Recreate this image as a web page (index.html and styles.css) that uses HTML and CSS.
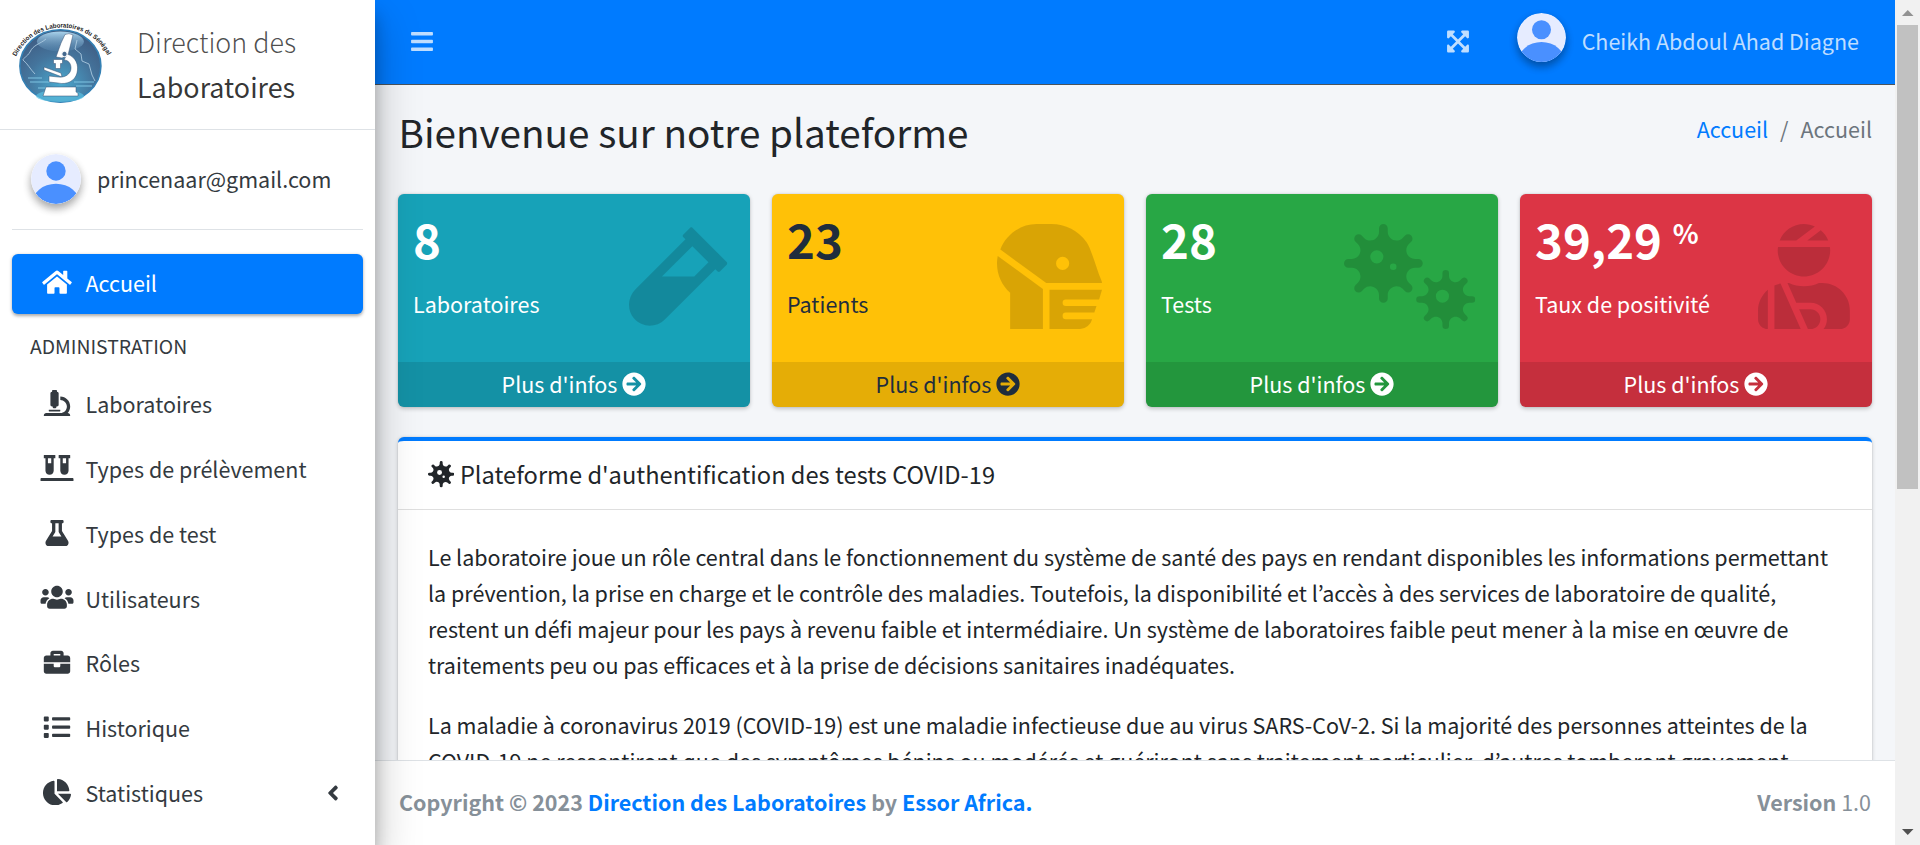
FILE: index.html
```html
<!DOCTYPE html>
<html lang="fr">
<head>
<meta charset="utf-8">
<title>Direction des Laboratoires</title>
<link rel="stylesheet" href="styles.css">
</head>
<body>
<svg class="defs" aria-hidden="true">
  <symbol id="i-home" viewBox="0 0 576 512"><path d="M280.37 148.26L96 300.11V464a16 16 0 0 0 16 16l112.06-.29a16 16 0 0 0 15.92-16V368a16 16 0 0 1 16-16h64a16 16 0 0 1 16 16v95.64a16 16 0 0 0 16 16.05L464 480a16 16 0 0 0 16-16V300L295.67 148.26a12.19 12.19 0 0 0-15.3 0zM571.6 251.47L488 182.56V44.05a12 12 0 0 0-12-12h-56a12 12 0 0 0-12 12v72.61L318.47 43a48 48 0 0 0-61 0L4.34 251.47a12 12 0 0 0-1.6 16.9l25.5 31A12 12 0 0 0 45.15 301l235.22-193.74a12.19 12.19 0 0 1 15.3 0L530.9 301a12 12 0 0 0 16.9-1.6l25.5-31a12 12 0 0 0-1.7-16.93z"/></symbol>
  <symbol id="i-microscope" viewBox="0 0 512 512"><path d="M160 320h12v16c0 8.84 7.16 16 16 16h40c8.84 0 16-7.16 16-16v-16h12c17.67 0 32-14.33 32-32V64c0-17.67-14.33-32-32-32V16c0-8.84-7.16-16-16-16h-64c-8.84 0-16 7.16-16 16v16c-17.67 0-32 14.33-32 32v224c0 17.67 14.33 32 32 32zm304 128h-1.29C493.24 413.99 512 369.2 512 320c0-105.88-86.12-192-192-192v64c70.58 0 128 57.42 128 128s-57.42 128-128 128H48c-26.51 0-48 21.49-48 48 0 8.84 7.16 16 16 16h480c8.84 0 16-7.16 16-16 0-26.51-21.49-48-48-48zm-360-32h208c4.42 0 8-3.58 8-8v-16c0-4.42-3.58-8-8-8H104c-4.42 0-8 3.58-8 8v16c0 4.42 3.58 8 8 8z"/></symbol>
  <symbol id="i-vials" viewBox="0 0 640 512"><path d="M72 64h24v240c0 44.1 35.9 80 80 80s80-35.9 80-80V64h24c4.4 0 8-3.6 8-8V8c0-4.4-3.6-8-8-8H72c-4.4 0-8 3.6-8 8v48c0 4.4 3.6 8 8 8zm72 0h64v96h-64V64zm480 384H16c-8.800 0-16 7.200-16 16v32c0 8.800 7.200 16 16 16h608c8.800 0 16-7.200 16-16v-32c0-8.800-7.200-16-16-16zM360 64h24v240c0 44.100 35.900 80 80 80s80-35.900 80-80V64h24c4.400 0 8-3.600 8-8V8c0-4.400-3.600-8-8-8H360c-4.400 0-8 3.600-8 8v48c0 4.400 3.600 8 8 8zm72 0h64v96h-64V64z"/></symbol>
  <symbol id="i-flask" viewBox="0 0 448 512"><path d="M437.2 403.5L320 215V64h8c13.3 0 24-10.7 24-24V24c0-13.3-10.7-24-24-24H120c-13.3 0-24 10.7-24 24v16c0 13.3 10.7 24 24 24h8v151L10.8 403.5C-18.5 450.6 15.3 512 70.9 512h306.2c55.7 0 89.4-61.5 60.1-108.5zM137.9 320l48.2-77.6c3.7-5.2 5.8-11.6 5.8-18.4V64h64v160c0 6.9 2.2 13.2 5.8 18.4l48.2 77.6h-172z"/></symbol>
  <symbol id="i-users" viewBox="0 0 640 512"><path d="M96 224c35.3 0 64-28.7 64-64s-28.7-64-64-64-64 28.7-64 64 28.7 64 64 64zm448 0c35.3 0 64-28.7 64-64s-28.7-64-64-64-64 28.7-64 64 28.7 64 64 64zm32 32h-64c-17.6 0-33.5 7.1-45.1 18.6 40.3 22.1 68.9 62 75.1 109.4h66c17.7 0 32-14.3 32-32v-32c0-35.3-28.7-64-64-64zm-256 0c61.9 0 112-50.1 112-112S381.9 32 320 32 208 82.1 208 144s50.1 112 112 112zm76.8 32h-8.3c-20.8 10-43.9 16-68.5 16s-47.6-6-68.5-16h-8.3C179.6 288 128 339.6 128 403.2V432c0 26.5 21.5 48 48 48h288c26.5 0 48-21.5 48-48v-28.8c0-63.6-51.6-115.2-115.2-115.2zm-223.7-13.4C161.5 263.1 145.6 256 128 256H64c-35.3 0-64 28.7-64 64v32c0 17.7 14.3 32 32 32h65.9c6.3-47.4 34.9-87.3 75.2-109.4z"/></symbol>
  <symbol id="i-briefcase" viewBox="0 0 512 512"><path d="M320 336c0 8.84-7.16 16-16 16h-96c-8.84 0-16-7.16-16-16v-48H0v144c0 25.6 22.4 48 48 48h416c25.6 0 48-22.4 48-48V288H320v48zm144-208h-80V80c0-25.6-22.4-48-48-48H176c-25.6 0-48 22.4-48 48v48H48c-25.6 0-48 22.4-48 48v80h512v-80c0-25.6-22.4-48-48-48zm-144 0H192V96h128v32z"/></symbol>
  <symbol id="i-list" viewBox="0 0 512 512"><path d="M80 368H16a16 16 0 0 0-16 16v64a16 16 0 0 0 16 16h64a16 16 0 0 0 16-16v-64a16 16 0 0 0-16-16zm0-320H16A16 16 0 0 0 0 64v64a16 16 0 0 0 16 16h64a16 16 0 0 0 16-16V64a16 16 0 0 0-16-16zm0 160H16a16 16 0 0 0-16 16v64a16 16 0 0 0 16 16h64a16 16 0 0 0 16-16v-64a16 16 0 0 0-16-16zm416 176H176a16 16 0 0 0-16 16v32a16 16 0 0 0 16 16h320a16 16 0 0 0 16-16v-32a16 16 0 0 0-16-16zm0-320H176a16 16 0 0 0-16 16v32a16 16 0 0 0 16 16h320a16 16 0 0 0 16-16V80a16 16 0 0 0-16-16zm0 160H176a16 16 0 0 0-16 16v32a16 16 0 0 0 16 16h320a16 16 0 0 0 16-16v-32a16 16 0 0 0-16-16z"/></symbol>
  <symbol id="i-pie" viewBox="0 0 544 512"><path d="M527.79 288H290.5l158.03 158.03c6.04 6.04 15.98 6.53 22.19.68 38.7-36.46 65.32-85.61 73.13-140.86 1.34-9.46-6.51-17.85-16.06-17.85zm-15.83-64.8C503.72 103.74 408.26 8.28 288.8.04 279.68-.59 272 7.1 272 16.24V240h223.77c9.14 0 16.82-7.68 16.19-16.8zM224 288V50.71c0-9.55-8.39-17.4-17.84-16.06C86.99 51.49-4.1 155.6.14 280.37 4.5 408.51 114.83 513.59 243.03 511.98c50.4-.63 96.97-16.87 135.26-44.03 7.9-5.6 8.42-17.23 1.57-24.08L224 288z"/></symbol>
  <symbol id="i-angle" viewBox="0 0 256 512"><path d="M31.7 239l136-136c9.4-9.4 24.6-9.4 33.9 0l22.6 22.6c9.4 9.4 9.4 24.6 0 33.9L127.9 256l96.4 96.4c9.4 9.4 9.4 24.6 0 33.9L201.7 409c-9.4 9.4-24.6 9.4-33.9 0l-136-136c-9.5-9.4-9.5-24.6-.1-34z"/></symbol>
  <symbol id="i-bars" viewBox="0 0 448 512"><path d="M16 132h416c8.8 0 16-7.2 16-16V76c0-8.8-7.2-16-16-16H16C7.2 60 0 67.2 0 76v40c0 8.8 7.2 16 16 16zm0 160h416c8.8 0 16-7.2 16-16v-40c0-8.8-7.2-16-16-16H16c-8.8 0-16 7.2-16 16v40c0 8.8 7.2 16 16 16zm0 160h416c8.8 0 16-7.2 16-16v-40c0-8.8-7.2-16-16-16H16c-8.8 0-16 7.2-16 16v40c0 8.8 7.2 16 16 16z"/></symbol>
  <symbol id="i-expand" viewBox="0 0 448 512"><path d="M448 344v112a23.94 23.94 0 0 1-24 24H312c-21.39 0-32.09-25.9-17-41l36.2-36.2L224 295.6 116.77 402.9 153 439c15.09 15.1 4.39 41-17 41H24a23.94 23.94 0 0 1-24-24V344c0-21.4 25.89-32.1 41-17l36.19 36.2L184.46 256 77.18 148.7 41 185c-15.1 15.1-41 4.4-41-17V56a23.94 23.94 0 0 1 24-24h112c21.39 0 32.09 25.9 17 41l-36.2 36.2L224 216.4l107.23-107.3L295 73c-15.09-15.1-4.39-41 17-41h112a23.94 23.94 0 0 1 24 24v112c0 21.4-25.89 32.1-41 17l-36.19-36.2L263.54 256l107.28 107.3L407 327.1c15.1-15.2 41-4.5 41 16.9z"/></symbol>
  <symbol id="i-arrow" viewBox="0 0 512 512"><path d="M256 8c137 0 248 111 248 248S393 504 256 504 8 393 8 256 119 8 256 8zm-28.9 143.6l75.5 72.4H120c-13.3 0-24 10.7-24 24v16c0 13.3 10.7 24 24 24h182.6l-75.5 72.4c-9.7 9.3-9.9 24.8-.4 34.3l11 10.9c9.4 9.4 24.6 9.4 33.9 0L404.3 273c9.4-9.4 9.4-24.6 0-33.9L271.6 106.3c-9.4-9.4-24.6-9.4-33.9 0l-11 10.9c-9.5 9.6-9.3 25.1.4 34.4z"/></symbol>
  <symbol id="i-vial" viewBox="0 0 480 512"><path d="M477.7 186.1L309.5 18.3c-3.1-3.1-8.2-3.1-11.3 0l-34 33.9c-3.1 3.1-3.1 8.2 0 11.3l11.2 11.1L33 316.5c-38.8 38.7-45.1 102-9.4 143.5 20.6 24 49.5 36 78.4 35.9 26.4 0 52.8-10 72.9-30.1l246.3-245.7 11.2 11.1c3.1 3.1 8.2 3.1 11.3 0l34-33.9c3.1-3 3.1-8.1 0-11.2zM318 256H161l148-147.7 78.5 78.3L318 256z"/></symbol>
  <symbol id="i-mask" viewBox="0 0 512 512"><path d="M.15 184.42C-2.17 244.21 23 298.06 64 334.88V512h160V316.51L3.67 156.25A182.28 182.28 0 0 0 .15 184.42zM509.22 275c-21-47.12-48.5-151.75-73.12-186.75A208.11 208.11 0 0 0 266.11 0H192C117 0 42.48 50.57 16.28 124.38L240 288h272a35 35 0 0 0-2.78-13zM320 224a32 32 0 1 1 32-32 32 32 0 0 1-32 32zM336 368h162L512 320H256v192h150.3a64 64 0 0 0 57.7-48H336a16 16 0 0 1 0-32h138.7L485.3 400H336a16 16 0 0 1 0-32z"/></symbol>
  <symbol id="i-viruses" viewBox="0 0 640 512"><path d="M624,352H611.88c-28.51,0-42.79-34.47-22.63-54.63l8.58-8.57a16,16,0,1,0-22.63-22.63l-8.57,8.58C546.47,294.91,512,280.63,512,252.12V240a16,16,0,0,0-32,0v12.12c0,28.51-34.47,42.79-54.63,22.63l-8.57-8.58a16,16,0,0,0-22.63,22.63l8.58,8.57c20.16,20.16,5.88,54.63-22.63,54.63H368a16,16,0,0,0,0,32h12.12c28.51,0,42.79,34.47,22.63,54.63l-8.58,8.57a16,16,0,1,0,22.63,22.63l8.57-8.58c20.16-20.16,54.63-5.88,54.63,22.63V496a16,16,0,0,0,32,0V483.88c0-28.51,34.47-42.79,54.63-22.63l8.57,8.58a16,16,0,1,0,22.63-22.63l-8.58-8.57C569.09,418.47,583.37,384,611.88,384H624a16,16,0,0,0,0-32ZM480,384a32,32,0,1,1,32-32A32,32,0,0,1,480,384ZM346.51,213.33h16.16a21.33,21.33,0,0,0,0-42.66H346.51c-38,0-57.05-46-30.17-72.84l11.43-11.44A21.33,21.33,0,0,0,297.6,56.23L286.17,67.66c-26.88,26.88-72.84,7.85-72.84-30.17V21.33a21.33,21.33,0,0,0-42.66,0V37.49c0,38-46,57.05-72.84,30.17L86.4,56.23A21.33,21.33,0,0,0,56.23,86.39L67.66,97.83c26.88,26.88,7.85,72.84-30.17,72.84H21.33a21.33,21.33,0,0,0,0,42.66H37.49c38,0,57.05,46,30.17,72.84L56.23,297.6A21.33,21.33,0,1,0,86.4,327.77l11.43-11.43c26.88-26.88,72.84-7.85,72.84,30.17v16.16a21.33,21.33,0,0,0,42.66,0V346.51c0-38,46-57.05,72.84-30.17l11.43,11.43a21.33,21.33,0,0,0,30.17-30.17l-11.43-11.43C289.46,259.29,308.49,213.33,346.51,213.33ZM160,192a32,32,0,1,1,32-32A32,32,0,0,1,160,192Zm80,32a16,16,0,1,1,16-16A16,16,0,0,1,240,224Z"/></symbol>
  <symbol id="i-injured" viewBox="0 0 448 512"><path d="M277.37 11.98C261.08 4.47 243.11 0 224 0c-53.69 0-99.5 33.13-118.51 80h81.19l90.69-68.02zM342.51 80c-7.9-19.47-20.67-36.2-36.49-49.52L239.99 80h102.52zM224 256c70.69 0 128-57.31 128-128 0-5.48-.95-10.7-1.61-16H97.61c-.67 5.3-1.61 10.52-1.61 16 0 70.69 57.31 128 128 128zM80 299.7V512h128.26l-98.45-221.52A132.835 132.835 0 0 0 80 299.7zM0 464c0 26.51 21.49 48 48 48V320.24C18.88 344.89 0 381.26 0 422.4V464zm256-48h-55.38l42.67 96H256c26.47 0 48-21.53 48-48s-21.53-48-48-48zm57.6-128h-16.71c-22.24 10.18-46.88 16-72.89 16s-50.65-5.82-72.89-16h-7.37l42.67 96H256c44.11 0 80 35.89 80 80 0 18.08-6.26 34.59-16.41 48H400c26.51 0 48-21.49 48-48v-41.6c0-74.23-60.17-134.4-134.4-134.4z"/></symbol>
  <symbol id="i-virus" viewBox="0 0 512 512"><path d="M483.55,227.55H462c-50.68,0-76.07-61.27-40.23-97.11L437,115.19A28.44,28.44,0,0,0,396.8,75L381.56,90.22c-35.84,35.83-97.11,10.45-97.11-40.23V28.44a28.45,28.45,0,0,0-56.9,0V50c0,50.68-61.27,76.06-97.11,40.23L115.2,75A28.44,28.44,0,0,0,75,115.19l15.25,15.25c35.84,35.84,10.45,97.11-40.23,97.11H28.45a28.45,28.45,0,1,0,0,56.89H50c50.68,0,76.07,61.28,40.23,97.12L75,396.8A28.45,28.45,0,0,0,115.2,437l15.24-15.25c35.84-35.84,97.11-10.45,97.11,40.23v21.54a28.45,28.45,0,0,0,56.9,0V462c0-50.68,61.27-76.07,97.11-40.23L396.8,437A28.45,28.45,0,0,0,437,396.8l-15.25-15.24c-35.84-35.84-10.45-97.12,40.23-97.12h21.54a28.45,28.45,0,1,0,0-56.89ZM224,272a48,48,0,1,1,48-48A48,48,0,0,1,224,272Zm80,56a24,24,0,1,1,24-24A24,24,0,0,1,304,328Z"/></symbol>
  <clipPath id="disc"><circle cx="25" cy="25" r="25"/></clipPath>
  <symbol id="i-avatar" viewBox="0 0 50 50"><g clip-path="url(#disc)"><rect width="50" height="50" fill="#e6ecff"/><circle cx="25" cy="17" r="9.7" fill="#4a90ff"/><ellipse cx="25" cy="50" rx="24" ry="20.3" fill="#4a90ff"/></g></symbol>
</svg>

<div class="app">
  <aside class="sidebar">
    <a class="brand">
      <svg class="brand-logo" viewBox="0 0 100 86">
        <defs>
          <radialGradient id="globe" cx=".5" cy=".75" r=".75"><stop offset="0" stop-color="#4aa9cf"/><stop offset=".55" stop-color="#44749c"/><stop offset="1" stop-color="#3f5a80"/></radialGradient>
          <linearGradient id="shine" x1="0" y1="0" x2="0" y2="1"><stop offset="0" stop-color="#a9d3ec"/><stop offset="1" stop-color="#5a8db6" stop-opacity=".3"/></linearGradient>
          <path id="arc" d="M6 36.500A51 51 0 0 1 98 36.500"/>
        </defs>
        <text class="logo-text"><textPath href="#arc" textLength="113" lengthAdjust="spacingAndGlyphs">Direction des Laboratoires du Sénégal</textPath></text>
        <ellipse cx="50.4" cy="46" rx="40.5" ry="36.300" fill="url(#globe)" stroke="#3480b4" stroke-width="1.6"/>
        <ellipse cx="50.4" cy="21.500" rx="23.500" ry="10" fill="url(#shine)"/>
        <path d="M18 58h14M20 62h20M28 68h8M64 62h20M66 66h16" stroke="#7fc4e2" stroke-width="1" fill="none"/>
        <path d="M36 19c-6 5-13 6-16 13-3 5-7 6-7 8 5 4 7 9 12 14M67 20l-2 9 6 5 1 7 7 3 3 11 3 6" stroke="#b5d2e6" stroke-width=".8" fill="none"/>
        <ellipse cx="50" cy="76" rx="24" ry="6" fill="#5cc4e5" opacity=".65"/>
        <g fill="#fff" stroke="#344f70" stroke-width=".5">
          <path d="M55 14.500q4-2 8 .5l-5 20-6 3-6-1 5-14z"/>
          <path d="M43.500 39.500h9v4h-2v5h-5v-5h-2z"/>
          <path d="M34 47l17 6 1 4-18-7z"/>
          <path d="M57 34c9 3 12 11 10 19-2 8-10 12-19 10l-9-1v-6l9 1c7 1 13-3 13-9 0-5-3-8-7-8z"/>
          <path d="M36 67h30v5l2 1v3H33l1-3z"/>
        </g>
        <circle cx="54.500" cy="34" r="2.700" fill="#43678d" stroke="#fff"/>
      </svg>
      <span class="brand-text"><span class="light">Direction des</span><span>Laboratoires</span></span>
    </a>
    <div class="user-panel">
      <svg class="avatar"><use href="#i-avatar"/></svg>
      <span class="user-mail">princenaar@gmail.com</span>
    </div>
    <nav class="nav">
      <a class="nav-link active"><svg class="nav-icon"><use href="#i-home"/></svg><span>Accueil</span></a>
      <div class="nav-header">ADMINISTRATION</div>
      <a class="nav-link"><svg class="nav-icon"><use href="#i-microscope"/></svg><span>Laboratoires</span></a>
      <a class="nav-link"><svg class="nav-icon"><use href="#i-vials"/></svg><span>Types de prélèvement</span></a>
      <a class="nav-link"><svg class="nav-icon"><use href="#i-flask"/></svg><span>Types de test</span></a>
      <a class="nav-link"><svg class="nav-icon"><use href="#i-users"/></svg><span>Utilisateurs</span></a>
      <a class="nav-link"><svg class="nav-icon"><use href="#i-briefcase"/></svg><span>Rôles</span></a>
      <a class="nav-link"><svg class="nav-icon"><use href="#i-list"/></svg><span>Historique</span></a>
      <a class="nav-link"><svg class="nav-icon"><use href="#i-pie"/></svg><span>Statistiques</span><svg class="nav-angle"><use href="#i-angle"/></svg></a>
    </nav>
  </aside>

  <div class="main">
    <header class="topbar">
      <svg class="bar-icon"><use href="#i-bars"/></svg>
      <div class="topbar-right">
        <svg class="bar-icon"><use href="#i-expand"/></svg>
        <svg class="avatar"><use href="#i-avatar"/></svg>
        <span class="user-name">Cheikh Abdoul Ahad Diagne</span>
      </div>
    </header>

    <main class="content">
      <div class="page-head">
        <h1 class="page-title">Bienvenue sur notre plateforme</h1>
        <div class="breadcrumb"><a class="link">Accueil</a><span>/</span><span>Accueil</span></div>
      </div>

      <div class="boxes">
        <div class="box info">
          <div class="inner"><div class="value">8</div><div class="label">Laboratoires</div></div>
          <svg class="box-icon w480"><use href="#i-vial"/></svg>
          <a class="more"><span>Plus d'infos</span><svg class="arrow"><use href="#i-arrow"/></svg></a>
        </div>
        <div class="box warning">
          <div class="inner"><div class="value">23</div><div class="label">Patients</div></div>
          <svg class="box-icon w512"><use href="#i-mask"/></svg>
          <a class="more"><span>Plus d'infos</span><svg class="arrow"><use href="#i-arrow"/></svg></a>
        </div>
        <div class="box success">
          <div class="inner"><div class="value">28</div><div class="label">Tests</div></div>
          <svg class="box-icon w640"><use href="#i-viruses"/></svg>
          <a class="more"><span>Plus d'infos</span><svg class="arrow"><use href="#i-arrow"/></svg></a>
        </div>
        <div class="box danger">
          <div class="inner"><div class="value">39,29 <sup>%</sup></div><div class="label">Taux de positivité</div></div>
          <svg class="box-icon w448"><use href="#i-injured"/></svg>
          <a class="more"><span>Plus d'infos</span><svg class="arrow"><use href="#i-arrow"/></svg></a>
        </div>
      </div>

      <section class="card">
        <div class="card-header"><svg class="card-icon"><use href="#i-virus"/></svg><span>Plateforme d'authentification des tests COVID-19</span></div>
        <div class="card-body">
          <p>Le laboratoire joue un rôle central dans le fonctionnement du système de santé des pays en rendant disponibles les informations permettant<br>la prévention, la prise en charge et le contrôle des maladies. Toutefois, la disponibilité et l’accès à des services de laboratoire de qualité,<br>restent un défi majeur pour les pays à revenu faible et intermédiaire. Un système de laboratoires faible peut mener à la mise en œuvre de<br>traitements peu ou pas efficaces et à la prise de décisions sanitaires inadéquates.</p>
          <p>La maladie à coronavirus 2019 (COVID-19) est une maladie infectieuse due au virus SARS-CoV-2. Si la majorité des personnes atteintes de la<br>COVID-19 ne ressentiront que des symptômes bénins ou modérés et guériront sans traitement particulier, d’autres tomberont gravement</p>
        </div>
      </section>
    </main>

    <footer class="footer">
      <strong>Copyright © 2023 <a class="link">Direction des Laboratoires</a> by <a class="link">Essor Africa.</a></strong>
      <span><b>Version</b> 1.0</span>
    </footer>
  </div>

  <div class="scrollbar">
    <svg class="sb-arrow" viewBox="0 0 25 25"><path d="M7 16h11.500L12.750 10z" fill="#929292"/></svg>
    <div class="sb-thumb"></div>
    <svg class="sb-arrow sb-down" viewBox="0 0 25 25"><path d="M7 9h11.500L12.750 15z" fill="#505050"/></svg>
  </div>
</div>
</body>
</html>
```
FILE: styles.css
```css
* { box-sizing: border-box; }

body {
  margin: 0;
  font-family: "Noto Sans CJK JP", "Noto Sans", sans-serif;
  font-size: 21.5px;
  line-height: 36px;
  color: #212529;
  background: #f4f6f9;
  overflow: hidden;
}

svg { fill: currentColor; flex: none; }
.defs { position: absolute; width: 0; height: 0; }
.link { color: #007bff; }

.app { display: flex; height: 845px; }

/* Sidebar */
.sidebar {
  position: relative;
  z-index: 2;
  flex: none;
  width: 375px;
  background: #fff;
  color: #343a40;
  box-shadow: 0 21px 42px rgba(0, 0, 0, .25), 0 15px 15px rgba(0, 0, 0, .22);
}

.brand {
  display: flex;
  height: 130px;
  padding: 20px 0 0 10px;
  border-bottom: 1px solid #dee2e6;
  color: rgba(0, 0, 0, .8);
}
.brand-logo { width: 100px; height: 86px; overflow: visible; }
.logo-text { font: bold 6.5px "Liberation Sans", sans-serif; fill: #222; }
.brand-text {
  display: flex;
  flex-direction: column;
  margin: -1px 0 0 27px;
  font-size: 26.9px;
  line-height: 45px;
}
.brand-text .light { font-weight: 300; color: rgba(0, 0, 0, .7); }

.user-panel {
  display: flex;
  height: 100px;
  margin: 0 12px;
  padding: 24px 0 0 19px;
  border-bottom: 1px solid #dee2e6;
}
.avatar {
  width: 50px;
  height: 50px;
  border-radius: 50%;
  box-shadow: 0 4.5px 9px rgba(0, 0, 0, .16), 0 4.5px 9px rgba(0, 0, 0, .23);
}
.user-mail { margin: 7px 0 0 16px; }

.nav { padding: 24px 12px 0; }
.nav-link {
  display: flex;
  align-items: center;
  height: 60px;
  margin-bottom: 4.8px;
  padding: 0 0 2px 25px;
  border-radius: 6px;
}
.nav-link.active {
  background: #007bff;
  color: #fff;
  box-shadow: 0 1.5px 4.5px rgba(0, 0, 0, .12), 0 1.5px 3px rgba(0, 0, 0, .24);
}
.nav-icon { width: 38px; height: 26.4px; margin: 0 10px 2px 0.500px; }
.nav-angle { width: 12px; height: 24px; margin: 0 24px 0 auto; }
.nav-header { height: 56.5px; padding: 9px 0 0 18px; font-size: 19.35px; }

/* Top bar */
.main { display: flex; flex-direction: column; flex: 1; min-width: 0; }
.topbar {
  display: flex;
  justify-content: space-between;
  align-items: center;
  flex: none;
  height: 85px;
  padding: 0 36px;
  border-bottom: 1px solid #4b545c;
  background: #007bff;
  color: rgba(255, 255, 255, .75);
}
.bar-icon { width: 22px; height: 25px; margin-bottom: 2px; }
.topbar-right { display: flex; align-items: center; }
.topbar-right .avatar { width: 49px; height: 49px; margin: 0 16px 9px 47.500px; }
.user-name { margin-bottom: 2px; }

/* Content */
.content { flex: 1; min-height: 0; overflow: hidden; padding: 0 23px; }
.page-head {
  display: flex;
  justify-content: space-between;
  height: 109px;
  padding-top: 20px;
}
.page-title { margin: 0 0 0 .5px; font-size: 38.7px; line-height: 52px; font-weight: 400; }
.breadcrumb { display: flex; gap: 12px; padding-top: 6px; color: #6c757d; }

.boxes { display: grid; grid-template-columns: repeat(4, 1fr); gap: 22px; }
.box {
  position: relative;
  display: flex;
  flex-direction: column;
  justify-content: space-between;
  height: 213px;
  border-radius: 6px;
  overflow: hidden;
  color: #fff;
  box-shadow: 0 0 1.5px rgba(0, 0, 0, .125), 0 1.5px 4.5px rgba(0, 0, 0, .2);
}
.info { background: #17a2b8; }
.warning { background: #ffc107; color: #1f2d3d; }
.success { background: #28a745; }
.danger { background: #dc3545; }
.inner { padding: 13px 15px; }
.value { font-size: 47.3px; line-height: 63px; font-weight: 700; white-space: nowrap; }
.value sup { position: relative; top: -15px; font-size: 26.9px; line-height: 0; vertical-align: baseline; }
.label { margin-top: 16px; }
.box-icon { position: absolute; top: 30px; right: 22.500px; height: 105px; fill: rgba(0, 0, 0, .15); }
.w480 { width: 98.400px; }
.w512 { width: 105px; }
.w640 { width: 131.250px; }
.w448 { width: 91.900px; }
.more {
  display: flex;
  justify-content: center;
  align-items: center;
  gap: 5px;
  height: 45px;
  padding-bottom: 1px;
  background: rgba(0, 0, 0, .1);
}
.more span { margin-bottom: 1px; }
.arrow { width: 24px; height: 24px; }

.card {
  margin-top: 30px;
  border-top: 4.5px solid #007bff;
  border-radius: 6px;
  background: #fff;
  box-shadow: 0 0 1.5px rgba(0, 0, 0, .125), 0 1.5px 4.5px rgba(0, 0, 0, .2);
}
.card-header {
  display: flex;
  align-items: center;
  gap: 5.5px;
  height: 69px;
  padding: 0 30px;
  border-bottom: 1px solid rgba(0, 0, 0, .125);
  font-size: 23.65px;
}
.card-header span { margin-bottom: 2px; }
.card-icon { width: 26.4px; height: 26.4px; margin-bottom: 1px; }
.card-body { padding: 29px 30px; white-space: nowrap; }
.card-body p { margin: 0 0 24px; }

/* Footer */
.footer {
  display: flex;
  justify-content: space-between;
  flex: none;
  height: 85px;
  padding: 23px 24px;
  border-top: 1px solid #dee2e6;
  background: #fff;
  color: #869099;
}

/* Page scrollbar */
.scrollbar { display: flex; flex-direction: column; flex: none; width: 25px; background: #f1f1f1; }
.sb-arrow { width: 25px; height: 25px; }
.sb-thumb { width: 21px; height: 464px; margin-left: 2px; background: #c1c1c1; }
.sb-down { margin-top: auto; }
```
